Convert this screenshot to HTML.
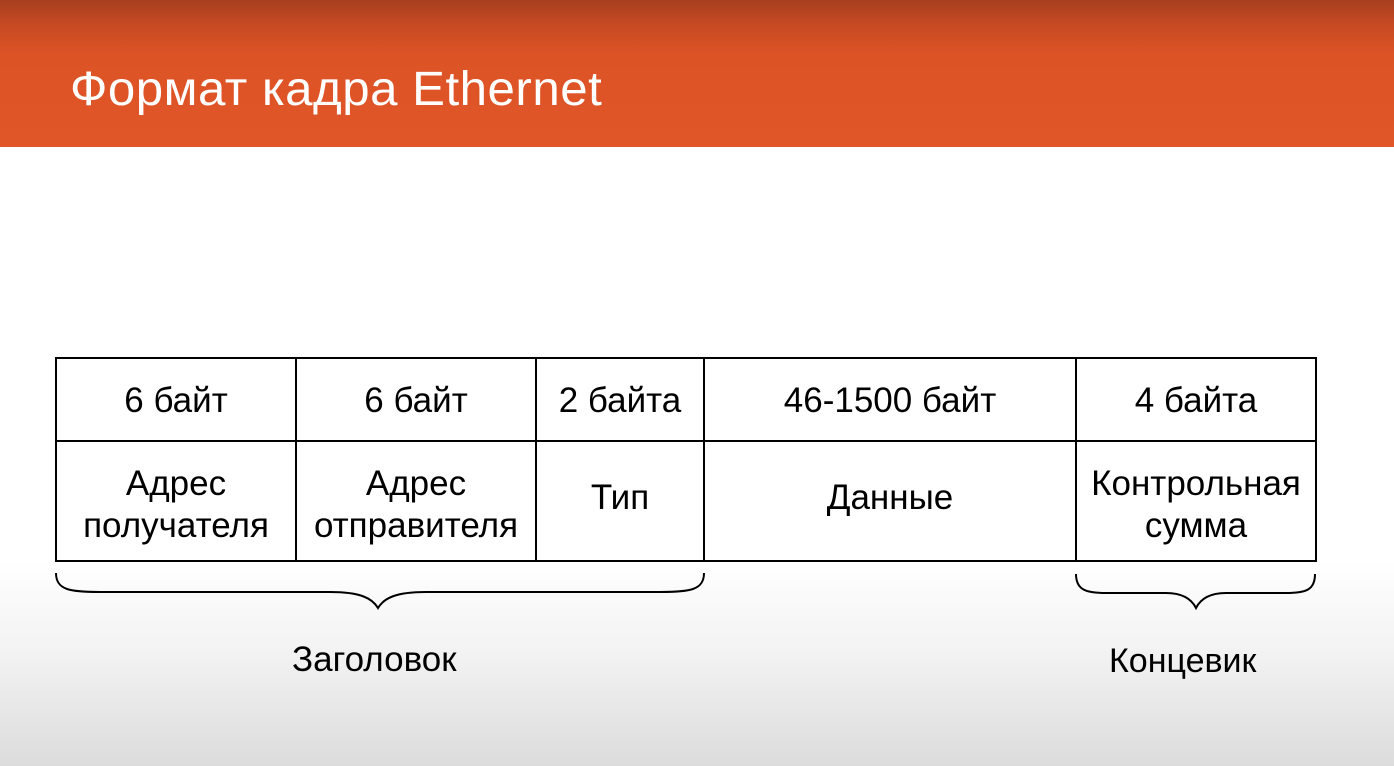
<!DOCTYPE html>
<html><head><meta charset="utf-8">
<style>
html,body{margin:0;padding:0;}
body{width:1394px;height:766px;position:relative;overflow:hidden;
background:linear-gradient(to bottom,#fff 0px,#fff 560px,#f3f3f3 650px,#dcdcdc 766px);
font-family:"Liberation Sans",sans-serif;color:#000;}
.hdr{position:absolute;left:0;top:0;width:1394px;height:147px;
background:linear-gradient(to bottom,#a63f1e 0px,#c74a23 25px,#dc5326 55px,#e15628 147px);}
.title{position:absolute;left:70px;top:62px;font-size:48px;color:#fff;font-weight:300;letter-spacing:0.5px;white-space:nowrap;transform:scaleX(1.025);transform-origin:left center;}
.c{position:absolute;text-align:center;font-size:35px;line-height:42px;white-space:nowrap;}
.lbl{position:absolute;font-size:34px;white-space:nowrap;}
</style></head><body>
<div class="hdr"><div class="title">Формат кадра Ethernet</div></div>
<svg width="1394" height="766" style="position:absolute;left:0;top:0" xmlns="http://www.w3.org/2000/svg">
<g fill="none" stroke="#000" stroke-width="2">
<rect x="56" y="358" width="1260" height="203"/>
<line x1="56" y1="441" x2="1316" y2="441"/>
<line x1="296" y1="358" x2="296" y2="561"/>
<line x1="536" y1="358" x2="536" y2="561"/>
<line x1="704" y1="358" x2="704" y2="561"/>
<line x1="1076" y1="358" x2="1076" y2="561"/>
<path d="M56 573 C56 590 70 592 100 592 L330 592 C360 592 372 598 378 608 C384 598 396 592 426 592 L660 592 C690 592 704 590 704 573"/>
<path d="M1076 574 C1076 590 1086 593 1106 593 L1166 593 C1184 593 1192 600 1196 608 C1200 600 1208 593 1226 593 L1286 593 C1306 593 1315 590 1315 574"/>
</g>
</svg>
<div class="c" style="left:56px;width:240px;top:380px">6 байт</div>
<div class="c" style="left:296px;width:240px;top:380px">6 байт</div>
<div class="c" style="left:536px;width:168px;top:380px">2 байта</div>
<div class="c" style="left:704px;width:372px;top:380px">46-1500 байт</div>
<div class="c" style="left:1076px;width:240px;top:380px">4 байта</div>
<div class="c" style="left:56px;width:240px;top:463px">Адрес<br>получателя</div>
<div class="c" style="left:296px;width:240px;top:463px">Адрес<br>отправителя</div>
<div class="c" style="left:536px;width:168px;top:477px">Тип</div>
<div class="c" style="left:704px;width:372px;top:477px">Данные</div>
<div class="c" style="left:1076px;width:240px;top:463px">Контрольная<br>сумма</div>
<div class="lbl" style="left:292px;top:640px;font-size:35px">Заголовок</div>
<div class="lbl" style="left:1109px;top:642px">Концевик</div>
</body></html>
